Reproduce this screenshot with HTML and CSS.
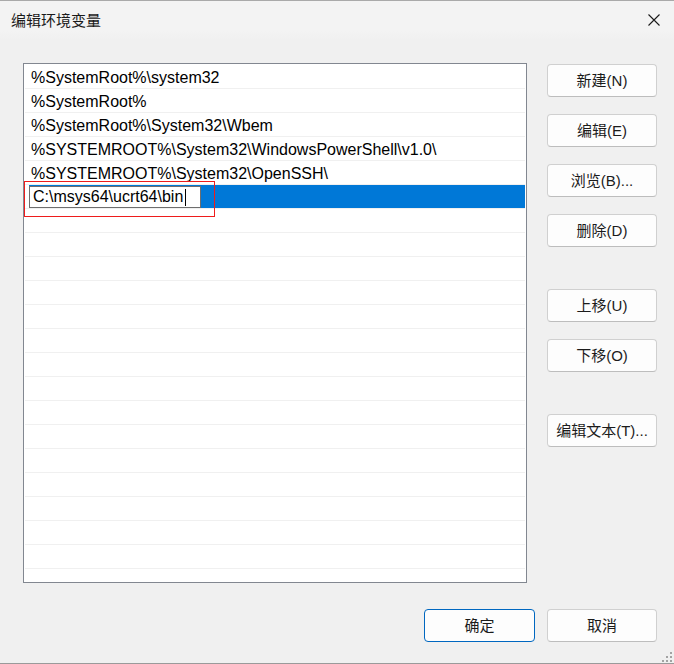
FILE: index.html
```html
<!DOCTYPE html>
<html lang="zh-CN">
<head>
<meta charset="utf-8">
<title>编辑环境变量</title>
<link rel="stylesheet" href="styles.css">
</head>
<body>
<div class="window">
  <div class="titlebar">
    <span class="title">编辑环境变量</span>
    <svg class="close" width="12" height="12" viewBox="0 0 12 12"><path d="M0.5 0.5 L11.5 11.5 M11.5 0.5 L0.5 11.5" stroke="#1a1a1a" stroke-width="1.1" fill="none"/></svg>
  </div>
  <div class="main">
    <div class="list">
      <div class="row">%SystemRoot%\system32</div>
      <div class="row">%SystemRoot%</div>
      <div class="row">%SystemRoot%\System32\Wbem</div>
      <div class="row">%SYSTEMROOT%\System32\WindowsPowerShell\v1.0\</div>
      <div class="row">%SYSTEMROOT%\System32\OpenSSH\</div>
      <div class="row selected">
        <div class="edit"><span>C:\msys64\ucrt64\bin</span><span class="caret"></span></div>
        <div class="mark"></div>
      </div>
      <div class="row"></div><div class="row"></div><div class="row"></div><div class="row"></div>
      <div class="row"></div><div class="row"></div><div class="row"></div><div class="row"></div>
      <div class="row"></div><div class="row"></div><div class="row"></div><div class="row"></div>
      <div class="row"></div><div class="row"></div><div class="row"></div>
    </div>
    <div class="side">
      <div class="group">
        <button class="btn">新建(N)</button>
        <button class="btn">编辑(E)</button>
        <button class="btn">浏览(B)...</button>
        <button class="btn">删除(D)</button>
      </div>
      <div class="group">
        <button class="btn">上移(U)</button>
        <button class="btn">下移(O)</button>
      </div>
      <div class="group">
        <button class="btn">编辑文本(T)...</button>
      </div>
    </div>
  </div>
  <div class="footer">
    <button class="btn default">确定</button>
    <button class="btn">取消</button>
  </div>
  <div class="grip">
    <i style="grid-area:1/3"></i>
    <i style="grid-area:2/2"></i><i style="grid-area:2/3"></i>
    <i style="grid-area:3/1"></i><i style="grid-area:3/2"></i><i style="grid-area:3/3"></i>
  </div>
</div>
</body>
</html>
```
FILE: styles.css
```css
* { box-sizing: border-box; }
html, body { margin: 0; padding: 0; }
body {
  width: 674px;
  height: 664px;
  overflow: hidden;
  font-family: "Liberation Sans", "Noto Sans CJK SC", sans-serif;
  color: #1b1b1b;
}
.window {
  position: relative;
  width: 674px;
  height: 664px;
  background: #f0f0f0;
  border-top: 1px solid #a9a9a9;
  border-bottom: 1px solid #9a9a9a;
  display: flex;
  flex-direction: column;
}
.titlebar {
  height: 39px;
  flex: none;
  display: flex;
  align-items: center;
  justify-content: space-between;
  padding: 0 14px 2px 11px;
  background: linear-gradient(#f3f3f3 0%, #f3f3f3 75%, #f0f0f0 100%);
}
.title {
  font-family: "Noto Sans CJK SC", sans-serif;
  font-size: 15px;
  color: #1a1a1a;
}
.close { display: block; }
.main {
  display: flex;
  padding: 23px 0 0 23px;
  gap: 20px;
  flex: none;
}
.list {
  width: 504px;
  height: 520px;
  border: 1px solid #828790;
  background: #fff;
  padding: 1px;
  overflow: hidden;
}
.row {
  position: relative;
  height: 24px;
  border-bottom: 1px solid #f0f0f0;
  padding: 2px 0 0 6px;
  font-size: 16px;
  line-height: 21px;
  color: #000;
  white-space: nowrap;
}
.row.selected {
  background: linear-gradient(90deg, #fff 0, #fff 4px, #0078d7 4px);
  padding: 1px 0 0 4px;
}
.edit {
  width: 172px;
  height: 22px;
  border: 1px solid #6e6e6e;
  background: #fff;
  padding-left: 3px;
  line-height: 20px;
  display: flex;
  align-items: center;
}
.caret {
  display: inline-block;
  width: 1px;
  height: 17px;
  background: #000;
  margin-left: 2px;
}
.mark {
  position: absolute;
  left: -1px;
  top: -4px;
  width: 191px;
  height: 36px;
  border: 1px solid #ee1c1c;
}
.side {
  display: flex;
  flex-direction: column;
  gap: 42px;
  padding-top: 1px;
}
.group {
  display: flex;
  flex-direction: column;
  gap: 17px;
}
.btn {
  width: 110px;
  height: 33px;
  padding: 0;
  border: 1px solid #d0d0d0;
  border-bottom-color: #bdbdbd;
  border-radius: 4px;
  background: #fdfdfd;
  font-family: "Liberation Sans", "Noto Sans CJK SC", sans-serif;
  font-size: 15px;
  color: #1b1b1b;
  text-align: center;
  line-height: 31px;
}
.btn.default {
  width: 111px;
  border: 1px solid #0067c0;
}
.footer {
  display: flex;
  justify-content: flex-end;
  gap: 12px;
  padding: 26px 17px 0 0;
}
.grip {
  position: absolute;
  right: 2px;
  bottom: 1px;
  display: grid;
  grid-template-columns: repeat(3, 2px);
  grid-template-rows: repeat(3, 2px);
  gap: 2px;
}
.grip i {
  display: block;
  width: 2px;
  height: 2px;
  background: #a3a3a3;
}
```
